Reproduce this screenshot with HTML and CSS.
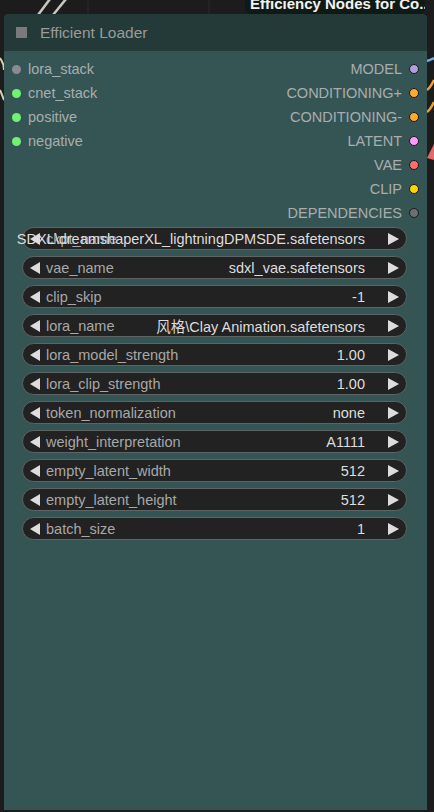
FILE: index.html
```html
<!DOCTYPE html>
<html lang="en">
<head>
<meta charset="utf-8">
<title>Efficient Loader</title>
<link rel="stylesheet" href="styles.css">
</head>
<body>
<div class="canvas">
  <svg class="wires" width="434" height="812" viewBox="0 0 434 812">
    <line x1="38" y1="15" x2="50" y2="-1" stroke="#c8c8c0" stroke-width="2.5"/>
    <line x1="53" y1="15" x2="66" y2="-1" stroke="#c8c8c0" stroke-width="2.5"/>
    <line x1="88" y1="0" x2="88" y2="14" stroke="#2a2a2a" stroke-width="1"/>
    <line x1="209" y1="0" x2="209" y2="14" stroke="#2a2a2a" stroke-width="1"/>
    <path d="M0 58 C3 62 4 66 4 70" stroke="#d8cfb0" stroke-width="2" fill="none"/>
    <path d="M0 90 C2 94 3 98 4 100" stroke="#d8cfb0" stroke-width="2" fill="none"/>
    <path d="M427 61 C430 60 432 59 434 58" stroke="#6ab0e8" stroke-width="2.5" fill="none"/>
    <path d="M427 90 C430 88 432 84 434 80" stroke="#f0a030" stroke-width="2.5" fill="none"/>
    <path d="M427 112 C430 110 432 106 434 102" stroke="#f0a030" stroke-width="2.5" fill="none"/>
    <path d="M427 158 C430 152 432 148 434 144 L434 160 Z" fill="#e06a6a"/>
  </svg>
  <div class="tooltip">Efficiency Nodes for Co..</div>
  <div class="node">
    <div class="title">
      <span class="collapse"></span>
      <span class="title-text">Efficient Loader</span>
    </div>
    <div class="slots">
      <div class="inputs">
        <div class="slot"><span class="dot gray"></span><span>lora_stack</span></div>
        <div class="slot"><span class="dot green"></span><span>cnet_stack</span></div>
        <div class="slot"><span class="dot green"></span><span>positive</span></div>
        <div class="slot"><span class="dot green"></span><span>negative</span></div>
      </div>
      <div class="outputs">
        <div class="slot out"><span>MODEL</span><span class="dot ring model"></span></div>
        <div class="slot out"><span>CONDITIONING+</span><span class="dot ring cond"></span></div>
        <div class="slot out"><span>CONDITIONING-</span><span class="dot ring cond"></span></div>
        <div class="slot out"><span>LATENT</span><span class="dot ring latent"></span></div>
        <div class="slot out"><span>VAE</span><span class="dot ring vae"></span></div>
        <div class="slot out"><span>CLIP</span><span class="dot ring clip"></span></div>
        <div class="slot out"><span>DEPENDENCIES</span><span class="dot ring dep"></span></div>
      </div>
    </div>
    <div class="widgets">
      <div class="widget"><span class="arrow left"></span><span class="w-label">ckpt_name</span><span class="w-value"><span>SDXL\dreamshaperXL_lightningDPMSDE.safetensors</span></span><span class="arrow right"></span></div>
      <div class="widget"><span class="arrow left"></span><span class="w-label">vae_name</span><span class="w-value"><span>sdxl_vae.safetensors</span></span><span class="arrow right"></span></div>
      <div class="widget"><span class="arrow left"></span><span class="w-label">clip_skip</span><span class="w-value"><span>-1</span></span><span class="arrow right"></span></div>
      <div class="widget"><span class="arrow left"></span><span class="w-label">lora_name</span><span class="w-value"><span>风格\Clay Animation.safetensors</span></span><span class="arrow right"></span></div>
      <div class="widget"><span class="arrow left"></span><span class="w-label">lora_model_strength</span><span class="w-value"><span>1.00</span></span><span class="arrow right"></span></div>
      <div class="widget"><span class="arrow left"></span><span class="w-label">lora_clip_strength</span><span class="w-value"><span>1.00</span></span><span class="arrow right"></span></div>
      <div class="widget"><span class="arrow left"></span><span class="w-label">token_normalization</span><span class="w-value"><span>none</span></span><span class="arrow right"></span></div>
      <div class="widget"><span class="arrow left"></span><span class="w-label">weight_interpretation</span><span class="w-value"><span>A1111</span></span><span class="arrow right"></span></div>
      <div class="widget"><span class="arrow left"></span><span class="w-label">empty_latent_width</span><span class="w-value"><span>512</span></span><span class="arrow right"></span></div>
      <div class="widget"><span class="arrow left"></span><span class="w-label">empty_latent_height</span><span class="w-value"><span>512</span></span><span class="arrow right"></span></div>
      <div class="widget"><span class="arrow left"></span><span class="w-label">batch_size</span><span class="w-value"><span>1</span></span><span class="arrow right"></span></div>
    </div>
  </div>
</div>
</body>
</html>
```
FILE: styles.css
```css
* { box-sizing: border-box; }
html, body {
  margin: 0;
  padding: 0;
  background: #1c1c1c;
  width: 434px;
  height: 812px;
  overflow: hidden;
  font-family: "Liberation Sans", Arial, "Noto Sans CJK SC", sans-serif;
}
.canvas {
  position: relative;
  width: 434px;
  height: 812px;
  padding-top: 14px;
  padding-left: 4px;
}
.wires {
  position: absolute;
  left: 0;
  top: 0;
}
.tooltip {
  position: absolute;
  left: 245px;
  top: -6px;
  width: 180px;
  height: 20px;
  padding: 0 0 0 5px;
  background: #0e1a13;
  color: #f2f2f2;
  font-weight: bold;
  font-size: 15px;
  line-height: 20px;
  border-radius: 0 0 6px 6px;
  white-space: nowrap;
  overflow: hidden;
  z-index: 2;
}
.node {
  position: relative;
  width: 423px;
  height: 796px;
  background: #355555;
  border-radius: 5px 5px 0 0;
  display: flex;
  flex-direction: column;
}
.title {
  height: 37px;
  background: #243a39;
  border-radius: 5px 5px 0 0;
  display: flex;
  align-items: center;
  padding-left: 12px;
  gap: 13px;
}
.collapse {
  width: 11px;
  height: 11px;
  background: #7a7a7a;
}
.title-text {
  color: #9a9a9a;
  font-size: 15.5px;
}
.slots {
  display: flex;
  justify-content: space-between;
  padding-top: 6px;
}
.inputs, .outputs {
  display: flex;
  flex-direction: column;
}
.slot {
  height: 24px;
  display: flex;
  align-items: center;
  font-size: 14.5px;
  color: #a9adad;
  gap: 7px;
  padding-left: 8px;
}
.slot.out {
  justify-content: flex-end;
  padding-left: 0;
  padding-right: 8px;
  gap: 7px;
}
.dot {
  width: 9px;
  height: 9px;
  border-radius: 50%;
  flex: 0 0 auto;
}
.dot.gray { background: #8a8a92; }
.dot.green { background: #72f272; }
.dot.ring { border: 1px solid #1a1a1a; width: 10px; height: 10px; }
.dot.model { background: #b39ddb; }
.dot.cond { background: #ffa931; }
.dot.latent { background: #ff9cf9; }
.dot.vae { background: #ff6e6e; }
.dot.clip { background: #ffd500; }
.dot.dep { background: #6b6f75; }
.widgets {
  display: flex;
  flex-direction: column;
  gap: 6px;
  padding: 2px 20px 0 18px;
}
.widget {
  height: 23px;
  border: 1px solid #5e6464;
  background: #222222;
  border-radius: 12px;
  display: flex;
  align-items: center;
  padding: 0 7px 0 7px;
  font-size: 14.5px;
}
.arrow {
  width: 0;
  height: 0;
  border-top: 6px solid transparent;
  border-bottom: 6px solid transparent;
  flex: 0 0 auto;
}
.arrow.left { border-right: 10px solid #dddddd; }
.arrow.right { border-left: 11px solid #dddddd; }
.w-label {
  color: #a8a8a8;
  margin-left: 6px;
  white-space: nowrap;
  flex: 0 0 auto;
}
.w-value {
  flex: 1;
  min-width: 0;
  display: flex;
  justify-content: flex-end;
  color: #dddddd;
  margin-right: 23px;
}
.w-value span {
  white-space: nowrap;
  flex: 0 0 auto;
}
```
